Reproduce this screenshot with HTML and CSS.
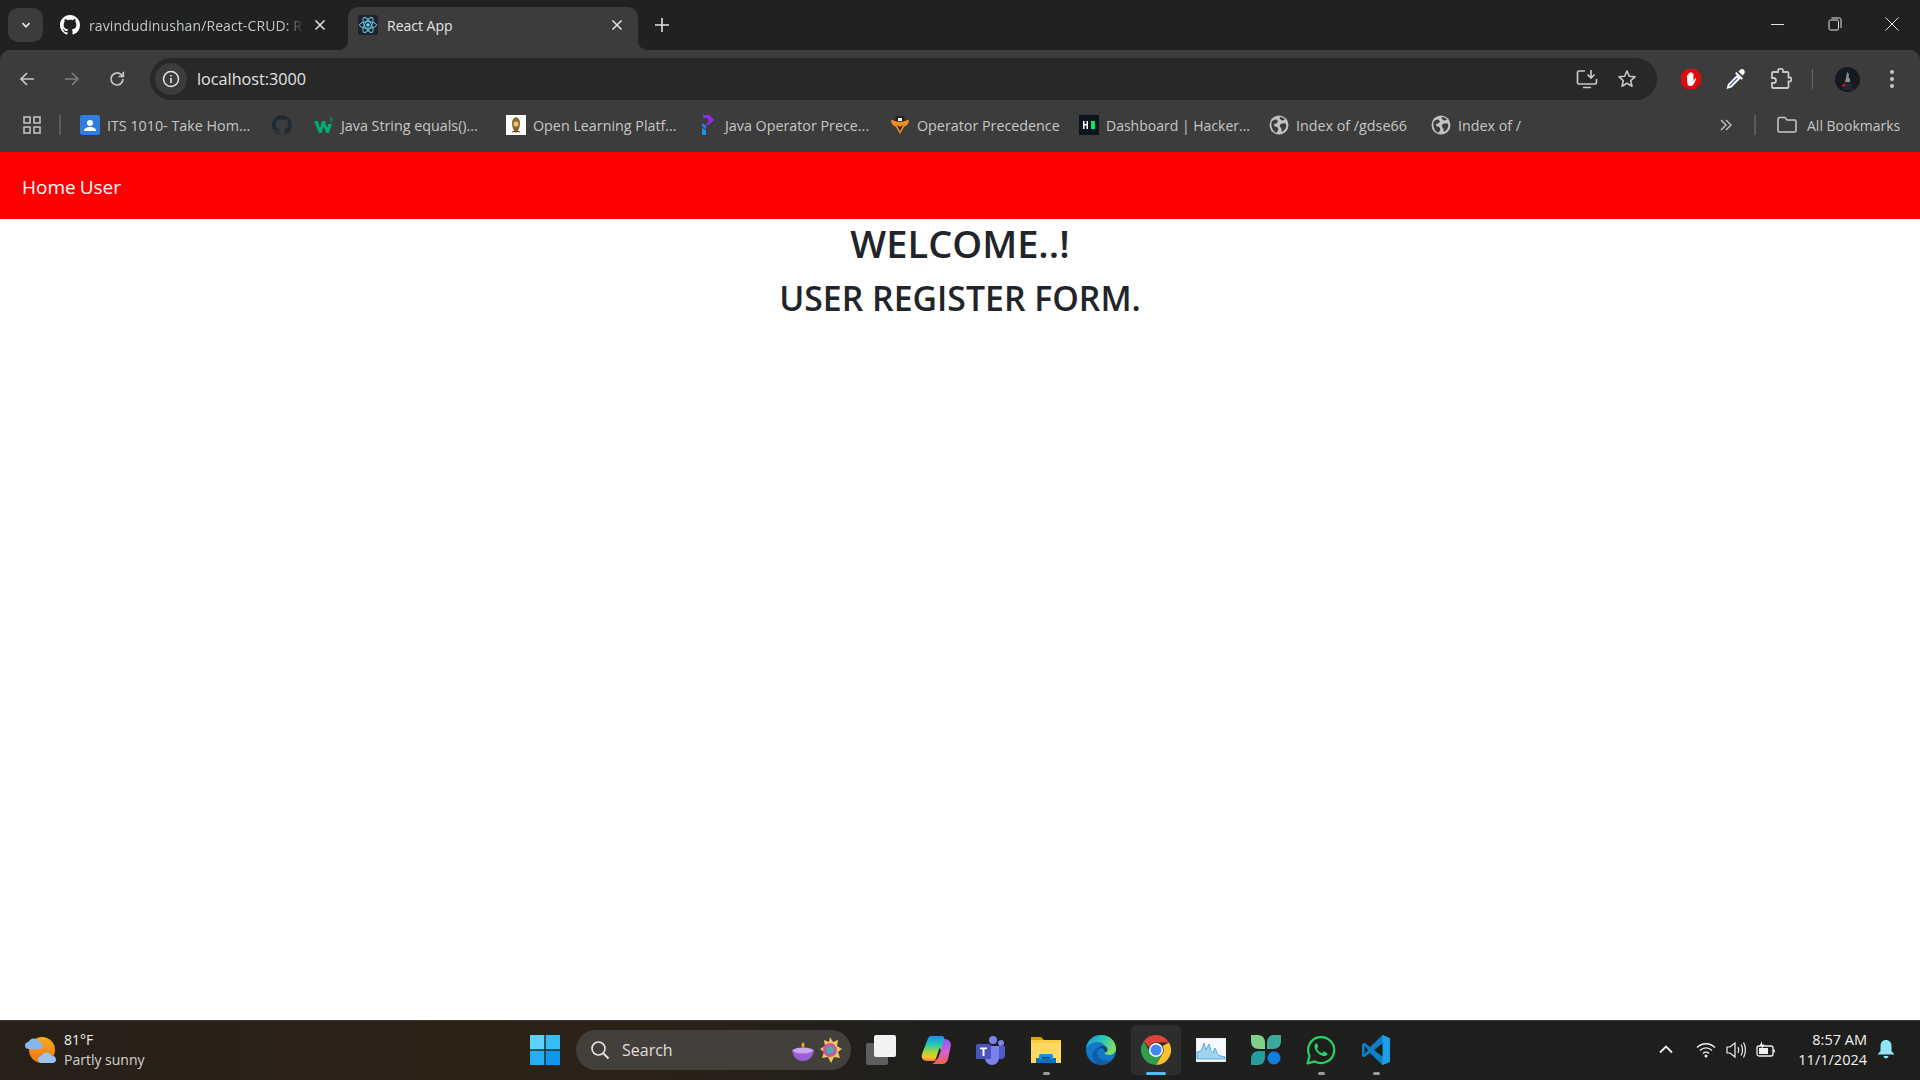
FILE: index.html
```html
<!DOCTYPE html>
<html lang="en">
<head>
    <meta charset="UTF-8">
    <meta name="viewport" content="width=device-width, initial-scale=1.0">
    <title>React App</title>
    <link rel="stylesheet" href="styles.css">
</head>
<body>
    <svg class="defs">
        <symbol id="globe" viewBox="0 0 20 20">
            <circle cx="10" cy="10" r="9.5" fill="#c2c2c2"/>
            <path d="M3 6c2-1 4-2 5-1s1 2 0 3-3 0-3 2 3 1 4 3-1 4-2 5C4 16 1 11 3 6zM12 9c2-1 4-1 5 0 1 3-1 6-4 8-1-2 0-3-1-4s-2-3 0-4zM11 2c2 0 4 1 5 3-2 0-3 1-4 0s-2-2-1-3z" fill="#3c3c3c"/>
        </symbol>
        <symbol id="octo" viewBox="0 0 16 16">
            <path fill-rule="evenodd" d="M8 0C3.58 0 0 3.58 0 8c0 3.54 2.29 6.53 5.47 7.59.4.07.55-.17.55-.38 0-.19-.01-.82-.01-1.49-2.01.37-2.53-.49-2.69-.94-.09-.23-.48-.94-.82-1.13-.28-.15-.68-.52-.01-.53.63-.01 1.08.58 1.23.82.72 1.21 1.87.87 2.33.66.07-.52.28-.87.51-1.07-1.78-.2-3.64-.89-3.64-3.95 0-.87.31-1.59.82-2.15-.08-.2-.36-1.02.08-2.12 0 0 .67-.21 2.2.82.64-.18 1.32-.27 2-.27.68 0 1.36.09 2 .27 1.53-1.04 2.2-.82 2.2-.82.44 1.1.16 1.92.08 2.12.51.56.82 1.27.82 2.15 0 3.07-1.87 3.75-3.65 3.95.29.25.54.73.54 1.48 0 1.07-.01 1.93-.01 2.2 0 .21.15.46.55.38A8.013 8.013 0 0016 8c0-4.42-3.58-8-8-8z"/>
        </symbol>
    </svg>

    <div class="tabstrip">
        <button class="tab-search">
            <svg width="12" height="12" viewBox="0 0 12 12"><path d="M2.5 4.2 6 7.8l3.5-3.6" fill="none" stroke="#e3e3e3" stroke-width="1.8"/></svg>
        </button>
        <div class="tab tab-first">
            <svg class="tab-icon octo-white" width="20" height="20"><use href="#octo"/></svg>
            <span class="tab-title tab-title-fade">ravindudinushan/React-CRUD: R</span>
            <svg class="tab-close" width="12" height="12" viewBox="0 0 12 12"><path d="M1.5 1.5l9 9m0-9l-9 9" stroke="#e3e3e3" stroke-width="1.5"/></svg>
        </div>
        <div class="tab tab-active">
            <svg class="tab-icon" width="20" height="20" viewBox="0 0 20 20">
                <rect width="20" height="20" rx="2" fill="#20232a"/>
                <g fill="none" stroke="#61dafb" stroke-width="0.9">
                    <ellipse cx="10" cy="10" rx="8.5" ry="3.3"/>
                    <ellipse cx="10" cy="10" rx="8.5" ry="3.3" transform="rotate(60 10 10)"/>
                    <ellipse cx="10" cy="10" rx="8.5" ry="3.3" transform="rotate(120 10 10)"/>
                </g>
                <circle cx="10" cy="10" r="1.7" fill="#61dafb"/>
            </svg>
            <span class="tab-title">React App</span>
            <svg class="tab-close" width="12" height="12" viewBox="0 0 12 12"><path d="M1.5 1.5l9 9m0-9l-9 9" stroke="#e3e3e3" stroke-width="1.5"/></svg>
        </div>
        <svg class="new-tab" width="14" height="14" viewBox="0 0 14 14"><path d="M7 0v14M0 7h14" stroke="#e3e3e3" stroke-width="1.6"/></svg>
        <div class="win-controls">
            <svg width="14" height="14" viewBox="0 0 14 14"><path d="M0 7.5h13" stroke="#e3e3e3" stroke-width="1"/></svg>
            <svg width="14" height="14" viewBox="0 0 14 14"><rect x="1" y="3" width="9.5" height="10" rx="1.5" fill="none" stroke="#e3e3e3"/><path d="M3.5 1h8a1.5 1.5 0 0 1 1.5 1.5V11" fill="none" stroke="#e3e3e3"/></svg>
            <svg width="14" height="14" viewBox="0 0 14 14"><path d="M.5.5l13 13m0-13l-13 13" stroke="#e3e3e3" stroke-width="1"/></svg>
        </div>
    </div>

    <div class="chrome">
        <div class="toolbar">
            <svg class="nav-btn" width="18" height="18" viewBox="0 0 18 18"><path d="M16 9H3M9 3 3 9l6 6" fill="none" stroke="#c7c7c7" stroke-width="1.7"/></svg>
            <svg class="nav-btn" width="18" height="18" viewBox="0 0 18 18"><path d="M2 9h13M9 3l6 6-6 6" fill="none" stroke="#7d7d7d" stroke-width="1.7"/></svg>
            <svg class="nav-btn" width="18" height="18" viewBox="0 0 18 18"><path d="M15 9a6 6 0 1 1-1.8-4.3L15 6.5M15.300 1.800V6.500H10.600" fill="none" stroke="#c7c7c7" stroke-width="1.7"/></svg>
            <div class="omnibox">
                <span class="site-info">
                    <svg width="18" height="18" viewBox="0 0 18 18"><circle cx="9" cy="9" r="7.500" fill="none" stroke="#e3e3e3" stroke-width="1.500"/><path d="M9 8v5M9 5v1.600" stroke="#e3e3e3" stroke-width="1.600"/></svg>
                </span>
                <span class="url">localhost:3000</span>
                <svg class="omni-install" width="22" height="20" viewBox="0 0 22 20"><path d="M9 2H3a1.500 1.500 0 0 0-1.500 1.500v10A1.500 1.500 0 0 0 3 15h16a1.500 1.500 0 0 0 1.500-1.500V10M7 18.500h8" fill="none" stroke="#c7c7c7" stroke-width="1.700"/><path d="M15 1v8m-3.500-3.500L15 9l3.500-3.500" fill="none" stroke="#c7c7c7" stroke-width="1.700"/></svg>
                <svg class="omni-star" width="20" height="20" viewBox="0 0 20 20"><path d="m10 2 2.300 5.300 5.700.5-4.300 3.800 1.300 5.600-5-3-5 3 1.300-5.600L2 7.800l5.700-.5z" fill="none" stroke="#c7c7c7" stroke-width="1.600" stroke-linejoin="round"/></svg>
            </div>
            <div class="ext-icons">
                <svg width="22" height="22" viewBox="0 0 22 22"><path d="M6.500 1h9L21 6.500v9L15.500 21h-9L1 15.500v-9z" fill="#e20b0b"/><path d="M7 12V7.500a1 1 0 0 1 1.500 0V11V5.500a1 1 0 0 1 1.700 0V11V4.800a1 1 0 0 1 1.700 0V11V5.800a1 1 0 0 1 1.600 0V13c1-1 1-2.500 2.300-2.700.5 0 .4.700.2 1-.9 1.700-1.500 4.700-3.500 6.200-1.500.8-3.500.6-4.700-.4C7.700 15.700 7 14 7 12z" fill="#fff"/></svg>
                <svg width="22" height="22" viewBox="0 0 22 22"><path d="M15 2c1-1.200 3-1.200 4 0s1.100 3 0 4l-1.500 1.500-4-4z" fill="#fff"/><path d="M11.500 4l6.500 6.500-1.500 1.300L10 5.300z" fill="#fff"/><path d="M12 7 3 16l-1.500 5 5-1.500 9-9z" fill="#fff"/><path d="M12 9.500 5 16.500l-1.500 2 2-.7 7-7z" fill="#2d55c8"/></svg>
                <svg width="22" height="22" viewBox="0 0 22 22"><path d="M8 4V3a2.500 2.500 0 0 1 5 0v1h4.500a1 1 0 0 1 1 1v4.500h1a2 2 0 0 1 0 4h-1V19a1 1 0 0 1-1 1H3a1 1 0 0 1-1-1v-4h1.500a2.500 2.500 0 0 0 0-5H2V5a1 1 0 0 1 1-1z" fill="none" stroke="#c7c7c7" stroke-width="1.800"/></svg>
                <span class="tool-sep"></span>
                <svg class="avatar" width="25" height="25" viewBox="0 0 25 25"><circle cx="12.500" cy="12.500" r="12.500" fill="#141a20"/><path d="M12 5l2 2-.5 3 1.500 2v3h-5l1-4z" fill="#8d8f92"/><path d="M9 15h7l2 8H8z" fill="#24282d"/><path d="M7 18l3-1.500 .5 2-3 1.500z" fill="#d8141c"/></svg>
                <svg class="kebab" width="6" height="20" viewBox="0 0 6 20"><circle cx="3" cy="3" r="2" fill="#c7c7c7"/><circle cx="3" cy="10" r="2" fill="#c7c7c7"/><circle cx="3" cy="17" r="2" fill="#c7c7c7"/></svg>
            </div>
        </div>

        <div class="bookmarks">
            <svg class="apps" width="18" height="18" viewBox="0 0 18 18"><g fill="none" stroke="#c7c7c7" stroke-width="1.500"><rect x="1" y="1" width="6" height="6"/><rect x="11" y="1" width="6" height="6"/><rect x="1" y="11" width="6" height="6"/><rect x="11" y="11" width="6" height="6"/></g></svg>
            <span class="bm-sep"></span>
            <div class="bm">
                <svg width="20" height="20" viewBox="0 0 20 20"><rect width="20" height="20" rx="2" fill="#2f7de1"/><circle cx="10" cy="8" r="3" fill="#fff"/><path d="M4 16c0-3 3-4 6-4s6 1 6 4z" fill="#fff"/></svg>
                <span class="bm-label bm-cut">ITS 1010- Take Hom...</span>
            </div>
            <div class="bm">
                <svg class="octo-dark" width="20" height="20"><use href="#octo"/></svg>
            </div>
            <div class="bm">
                <svg width="20" height="20" viewBox="0 0 20 20"><path d="M0 6h4l2 7 2-7h3l2 7 1-4h4l-3 9h-3l-2.500-7L8 18H5z" fill="#04aa6d"/><text class="w3-sup" x="15" y="7">3</text></svg>
                <span class="bm-label bm-cut">Java String equals()...</span>
            </div>
            <div class="bm">
                <svg width="20" height="20" viewBox="0 0 20 20"><rect width="20" height="20" fill="#fff"/><path d="M10 2c3 1 4 3 4 7s-2 7-4 9c-2-2-4-5-4-9s1-6 4-7z" fill="#8a6a2c"/><circle cx="10" cy="9" r="2.500" fill="#e6c87a"/><path d="M6 17c2-1 6-1 8 0" stroke="#7b1c1c" fill="none"/></svg>
                <span class="bm-label bm-cut">Open Learning Platf...</span>
            </div>
            <div class="bm">
                <svg width="20" height="20" viewBox="0 0 20 20"><path d="M5 0h7l4 5-5 5-3-1 3-3-2-3H5z" fill="#8b2fe0"/><path d="M4 8l5 3-2 3-3-3z" fill="#3a6fe8"/><path d="M4 13l4 2v5H4z" fill="#1696e8"/></svg>
                <span class="bm-label bm-cut">Java Operator Prece...</span>
            </div>
            <div class="bm">
                <svg width="20" height="20" viewBox="0 0 20 20"><path d="M1 5c3 0 5 2 9 2s6-2 9-2c0 4-3 6-5 7l-4 7-4-7C4 11 1 9 1 5z" fill="#ef8c1f"/><path d="M6 1h8l1 5H5z" fill="#222"/><rect x="8" y="3" width="4" height="3" fill="#eee"/><path d="M7 10l3 2 3-2-3 6z" fill="#222"/></svg>
                <span class="bm-label bm-op">Operator Precedence</span>
            </div>
            <div class="bm">
                <svg width="20" height="20" viewBox="0 0 20 20"><rect width="20" height="20" fill="#0e141e"/><rect x="12" y="6" width="4" height="8" fill="#00ea64"/><path d="M4 6h1.500v3h2V6H9v8H7.500v-3.500h-2V14H4z" fill="#fff"/></svg>
                <span class="bm-label bm-hr">Dashboard | Hacker...</span>
            </div>
            <div class="bm">
                <svg width="20" height="20"><use href="#globe"/></svg>
                <span class="bm-label bm-index">Index of /gdse66</span>
            </div>
            <div class="bm">
                <svg width="20" height="20"><use href="#globe"/></svg>
                <span class="bm-label">Index of /</span>
            </div>
            <svg class="bm-more" width="12" height="12" viewBox="0 0 12 12"><path d="M1 1l5 5-5 5M6 1l5 5-5 5" fill="none" stroke="#c7c7c7" stroke-width="1.300"/></svg>
            <span class="bm-sep bm-sep-right"></span>
            <div class="bm bm-all">
                <svg width="20" height="18" viewBox="0 0 20 18"><path d="M1 3a1.500 1.500 0 0 1 1.500-1.500H8l2 2.500h7.500A1.500 1.500 0 0 1 19 5.500v9a1.500 1.500 0 0 1-1.500 1.500h-15A1.500 1.500 0 0 1 1 14.500z" fill="none" stroke="#c7c7c7" stroke-width="1.500"/></svg>
                <span class="bm-label bm-all-label">All Bookmarks</span>
            </div>
        </div>
    </div>

    <nav class="navbar">
        <a class="nav-link">Home</a>
        <a class="nav-link">User</a>
    </nav>

    <main class="page">
        <h1>WELCOME..!</h1>
        <h2>USER REGISTER FORM.</h2>
    </main>

    <footer class="taskbar">
        <div class="tb-left">
            <svg width="32" height="32" viewBox="0 0 32 32">
                <defs>
                    <linearGradient id="sun" x1="0" y1="0" x2="0" y2="1"><stop offset="0" stop-color="#f9ac1c"/><stop offset="1" stop-color="#e9760d"/></linearGradient>
                </defs>
                <circle cx="18" cy="16" r="13" fill="url(#sun)"/>
                <path d="M1 11.500a3.500 3.500 0 0 1 3.500-3.500 5.500 5.500 0 0 1 10.300 0 3.500 3.500 0 0 1 1 7H4a3.500 3.500 0 0 1-3-3.500z" fill="#86b6ee"/>
                <path d="M14 25.500a3.500 3.500 0 0 1 3.500-3.500 5.500 5.500 0 0 1 10.300 0 3.500 3.500 0 0 1 1.200 7H17a3.500 3.500 0 0 1-3-3.500z" fill="#9cc3ee"/>
            </svg>
            <div class="weather">
                <span>81°F</span>
                <span class="weather-sub">Partly sunny</span>
            </div>
        </div>
        <div class="tb-center">
            <div class="tb-item">
                <svg width="30" height="30" viewBox="0 0 30 30"><rect x="0" y="0" width="14.300" height="14.300" fill="#5cd2f8"/><rect x="15.700" y="0" width="14.300" height="14.300" fill="#36bcf6"/><rect x="0" y="15.700" width="14.300" height="14.300" fill="#25aef5"/><rect x="15.700" y="15.700" width="14.300" height="14.300" fill="#0d97ef"/></svg>
            </div>
            <div class="search">
                <svg width="20" height="20" viewBox="0 0 20 20"><circle cx="8.500" cy="8.500" r="6.500" fill="none" stroke="#e8e8e8" stroke-width="1.600"/><path d="m13.500 13.500 5 5" stroke="#e8e8e8" stroke-width="1.800"/></svg>
                <span class="search-text">Search</span>
                <svg class="search-art" width="52" height="28" viewBox="0 0 52 28">
                    <path d="M12 6c2 2 2 4 0 6-2-2-2-4 0-6z" fill="#f5a623"/>
                    <path d="M1 14c4-3 18-3 22 0-1 7-5 11-11 11S2 21 1 14z" fill="#9a5fd6"/>
                    <ellipse cx="12" cy="14.500" rx="10" ry="3" fill="#c9a6ee"/>
                    <path d="M39 1l3 5 5-2-1 6 5 3-4 3 2 6-6-1-3 6-3-6-6 1 2-6-4-3 5-3-1-6 5 2z" fill="#f4c65e"/>
                    <circle cx="39" cy="14" r="7" fill="#c45aa0"/>
                    <circle cx="39" cy="14" r="3.500" fill="#3fb5a5"/>
                </svg>
            </div>
            <div class="tb-item">
                <svg width="30" height="30" viewBox="0 0 30 30"><rect x="0" y="8" width="22" height="22" rx="2" fill="#5e5e5e"/><rect x="8" y="0" width="22" height="22" rx="2" fill="#f2f2f2"/></svg>
            </div>
            <div class="tb-item">
                <svg width="30" height="30" viewBox="0 0 30 30">
                    <defs>
                        <linearGradient id="cp-left" x1="0.500" y1="0" x2="0.500" y2="1"><stop offset="0" stop-color="#1f8ff0"/><stop offset="0.350" stop-color="#25c9b0"/><stop offset="0.650" stop-color="#a8d83a"/><stop offset="0.850" stop-color="#f7c52e"/><stop offset="1" stop-color="#f57a3c"/></linearGradient>
                        <linearGradient id="cp-right" x1="0.500" y1="0" x2="0.500" y2="1"><stop offset="0" stop-color="#8c5cf0"/><stop offset="0.500" stop-color="#d560d8"/><stop offset="1" stop-color="#f2643c"/></linearGradient>
                    </defs>
                    <path d="M21 7c1.500-3 3-3.500 5-2.500 3 1 4.200 3.500 3.800 6.500l-2.800 13c-.8 3-3 5-6 5H11c2-1 4-2.500 5-5.500z" fill="url(#cp-right)"/>
                    <path d="M10 1h10c3 0 4 2 3 4l-6 18c-1 2-2 3-4 3H6c-4 0-6-3-5-7L6 6c1-3 2-5 4-5z" fill="url(#cp-left)"/>
                    <path d="M18.500 13 15.500 22c-.5 1.500-1 2.500-2 3.500 2.500-.5 3.500-2 4.200-4L20 15z" fill="#1e1e1c"/>
                </svg>
            </div>
            <div class="tb-item">
                <svg width="30" height="30" viewBox="0 0 30 30">
                    <circle cx="25" cy="8" r="3" fill="#7b83eb"/>
                    <circle cx="17" cy="5" r="4" fill="#7b83eb"/>
                    <path d="M20 11h9v9a4 4 0 0 1-4 4h-2z" fill="#5059c9"/>
                    <path d="M9 11h14v12a7 7 0 0 1-14 0z" fill="#7b83eb"/>
                    <rect x="0" y="9" width="15" height="15" rx="1.500" fill="#4b53bc"/>
                    <path d="M4 12.500h7v1.800H8.500V21h-2v-6.700H4z" fill="#fff"/>
                </svg>
            </div>
            <div class="tb-item">
                <svg width="30" height="30" viewBox="0 0 30 30">
                    <path d="M0 2h10l3 3h-13z" fill="#d9a406"/>
                    <path d="M0 5h30v23H0z" fill="#fccf45"/>
                    <path d="M0 8h30v20H0z" fill="#ffd95f"/>
                    <path d="M5 23h20v5H5z" fill="#0b6fc0"/>
                    <path d="M10 19h10a2 2 0 0 1 2 2v3H8v-3a2 2 0 0 1 2-2z" fill="#1c8fe0"/>
                    <rect x="11" y="22" width="8" height="1.500" fill="#063f70"/>
                </svg>
                <span class="tb-dot"></span>
            </div>
            <div class="tb-item">
                <svg width="30" height="30" viewBox="0 0 30 30">
                    <defs>
                        <linearGradient id="edge-top" x1="0" y1="0" x2="1" y2="0.400"><stop offset="0" stop-color="#1594d8"/><stop offset="0.600" stop-color="#2fc6b0"/><stop offset="1" stop-color="#7fdc6a"/></linearGradient>
                    </defs>
                    <circle cx="15" cy="15" r="15" fill="#1477c9"/>
                    <path d="M15 0c8.500 0 15 6 15 14 0 3.500-2.800 6-7 6-3 0-4.500-1-4.500-2.500 1-1 1.500-2 1.500-3.500 0-4-4-7-9-7C6.500 7 2 10 0 14 .5 6 7 0 15 0z" fill="url(#edge-top)"/>
                    <path d="M12 15c-2 4 1 9.500 6 10.500 3 .5 6 .5 9-1.500-3 3.500-7 6-12 6-1.500 0-3-.2-4-.8C6 26 5 20 8 15.500c1-1.500 2.500-2.500 4-3z" fill="#0f5ea8"/>
                    <path d="M12 14.500c.5-2.500 2.500-3.500 5-3.500 2.500 0 4.500 1.500 4.500 3.500 0 1.500-1 2.500-1.500 3-1-.5-2-1.500-2-3-.5-1-2-1.500-3-1.500s-2 .5-3 1.500z" fill="#0d3f70"/>
                </svg>
            </div>
            <div class="tb-item tb-active">
                <svg width="30" height="30" viewBox="0 0 30 30">
                    <path d="M15 0a15 15 0 0 1 13 7.500H15a7.500 7.500 0 0 0-7 4.800L2.800 6.300A15 15 0 0 1 15 0z" fill="#db4437"/>
                    <path d="M28 7.500A15 15 0 0 1 15 30l6.500-11.200A7.500 7.500 0 0 0 21.500 11z" fill="#fbc02d"/>
                    <path d="M2.800 6.300 9 17.200a7.500 7.500 0 0 0 12.500 1.600L15 30A15 15 0 0 1 2.800 6.300z" fill="#2e9e49"/>
                    <circle cx="15" cy="15" r="7" fill="#fff"/>
                    <circle cx="15" cy="15" r="5.500" fill="#4285f4"/>
                </svg>
                <span class="tb-dot tb-dot-active"></span>
            </div>
            <div class="tb-item">
                <svg width="30" height="24" viewBox="0 0 30 24">
                    <rect width="30" height="24" fill="#e8eef5"/>
                    <rect x="1" y="1" width="28" height="22" fill="#f7fafd"/>
                    <path d="M1 21V14l4-1 3-8 2 7 3-6 2 7 2 2 2-5 3 7 3 1 4 1v2z" fill="#9fd5f2" stroke="#2e93d0" stroke-width=".7"/>
                </svg>
            </div>
            <div class="tb-item">
                <svg width="30" height="30" viewBox="0 0 30 30">
                    <path d="M0 0h7c5 0 7 4 7 8v6H8c-5 0-8-3-8-8z" fill="#7fd18a"/>
                    <path d="M30 0h-7c-5 0-7 4-7 8v6h6c5 0 8-3 8-8z" fill="#3aa89a"/>
                    <path d="M0 30h7c5 0 7-4 7-8v-6H8c-5 0-8 3-8 8z" fill="#269c9c"/>
                    <circle cx="23" cy="23" r="6.500" fill="#0f7fe0"/>
                </svg>
            </div>
            <div class="tb-item">
                <svg width="30" height="30" viewBox="0 0 30 30">
                    <path d="M1.500 28.500 3.600 21A13 13 0 1 1 8.800 26.400z" fill="none" stroke="#25d366" stroke-width="2.200" stroke-linejoin="round"/>
                    <path d="M10 8.500c-1.500 1-2 2.800-1.200 5 1.300 3.300 4.300 6.200 7.500 7.300 2.300.7 4 .1 5-1.300.4-.7.2-1.300-.4-1.600l-2.500-1.200c-.5-.2-.9-.1-1.200.3l-.8 1c-.3.3-.6.3-1 .1-1.800-.8-3.300-2.200-4.200-4-.2-.4-.1-.7.100-1l.7-.8c.3-.4.300-.7.100-1.100l-1-2.500c-.3-.6-.7-.6-1.600-.2z" fill="#25d366"/>
                </svg>
                <span class="tb-dot"></span>
            </div>
            <div class="tb-item">
                <svg width="30" height="30" viewBox="0 0 30 30">
                    <path d="M21.500 0 29 3.300v23.400L21.500 30 9 18l-5.500 4.300L1 21V9l2.500-1.300L9 12z" fill="#0e7ec6"/>
                    <path d="M21.500 0 29 3.300v23.400L21.500 30z" fill="#1d9ee8"/>
                    <path d="M21.500 8.500v13L13 15zM3.500 10.700 7 15l-3.500 4.300z" fill="#1e1e1c"/>
                </svg>
                <span class="tb-dot"></span>
            </div>
        </div>
        <div class="tb-right">
            <svg class="tray-chev" width="14" height="9" viewBox="0 0 14 9"><path d="M1 7.500 7 1.500l6 6" fill="none" stroke="#f0f0f0" stroke-width="1.800"/></svg>
            <svg width="20" height="16" viewBox="0 0 20 16"><g fill="none" stroke="#f0f0f0" stroke-width="1.300"><path d="M1 5.500c5-5 13-5 18 0"/><path d="M4 8.500c3.500-3.500 8.500-3.500 12 0"/><path d="M7 11.500c1.700-1.700 4.300-1.700 6 0"/></g><circle cx="10" cy="14" r="1.500" fill="#f0f0f0"/></svg>
            <svg width="20" height="18" viewBox="0 0 20 18"><path d="M1 6h3l5-4v14l-5-4H1z" fill="none" stroke="#f0f0f0" stroke-width="1.200"/><path d="M12 6c1 2 1 4 0 6M15 3.500c2 3 2 8 0 11M17.500 1.500c2.500 4 2.500 11 0 15" fill="none" stroke="#f0f0f0" stroke-width="1.200"/></svg>
            <svg width="20" height="18" viewBox="0 0 20 18"><rect x="1" y="5" width="16" height="10" rx="2" fill="none" stroke="#f0f0f0" stroke-width="1.300"/><rect x="3" y="7" width="9" height="6" fill="#f0f0f0"/><path d="M18 8.500v3" stroke="#f0f0f0" stroke-width="1.600"/><path d="M6 0 3.500 5H6L5 9l3.500-5.500H6z" fill="#f0f0f0"/></svg>
            <div class="clock">
                <span>8:57 AM</span>
                <span>11/1/2024</span>
            </div>
            <svg class="bell" width="18" height="20" viewBox="0 0 18 20"><path d="M9 0c3.500 0 5.500 2.500 5.500 6v5l3 3.500H.5l3-3.500V6C3.500 2.500 5.500 0 9 0z" fill="#8fe3fb"/><path d="M6.500 16h5a2.500 2.500 0 0 1-5 0z" fill="#8fe3fb"/></svg>
        </div>
    </footer>
</body>
</html>
```

FILE: styles.css
```css
* {
    box-sizing: border-box;
}
html, body {
    margin: 0;
    height: 100%;
}
body {
    display: flex;
    flex-direction: column;
    height: 1080px;
    overflow: hidden;
    background-color: #202221;
    font-family: "Open Sans", "Noto Sans", sans-serif;
}
.defs {
    display: none;
}
svg {
    flex-shrink: 0;
    display: block;
}

/* tab strip */
.tabstrip {
    display: flex;
    align-items: flex-end;
    height: 50px;
    padding-left: 8px;
    background-color: #202221;
}
.tab-search {
    align-self: flex-start;
    width: 35px;
    height: 34px;
    margin-top: 8px;
    padding: 0;
    display: flex;
    align-items: center;
    justify-content: center;
    background-color: #3c3c3c;
    border: none;
    border-radius: 10px;
}
.tab {
    display: flex;
    align-items: center;
    width: 290px;
    height: 43px;
    padding: 0 7px 7px 10px;
    gap: 8px;
    color: #c4c7c5;
    font-size: 14px;
}
.tab-first {
    width: 305px;
    padding-left: 17px;
    padding-right: 14px;
    gap: 9px;
}
.tab-active {
    position: relative;
    gap: 9px;
    color: #e3e3e3;
    background-color: #3c3c3c;
    border-radius: 10px 10px 0 0;
}
.tab-active::before,
.tab-active::after {
    content: "";
    position: absolute;
    bottom: 0;
    width: 10px;
    height: 10px;
}
.tab-active::before {
    left: -10px;
    background: radial-gradient(circle at 0 0, transparent 10px, #3c3c3c 10.5px);
}
.tab-active::after {
    right: -10px;
    background: radial-gradient(circle at 100% 0, transparent 10px, #3c3c3c 10.5px);
}
.tab-title {
    flex: 1;
    min-width: 0;
    white-space: nowrap;
}
.tab-title-fade {
    letter-spacing: 0.1px;
    mask-image: linear-gradient(to right, #000 90%, transparent 100%);
    -webkit-mask-image: linear-gradient(to right, #000 90%, transparent 100%);
}
.tab-close {
    margin-right: 8px;
}
.octo-white {
    fill: #fff;
}
.octo-dark {
    fill: #202a33;
}
.new-tab {
    margin: 0 0 18px 17px;
}
.win-controls {
    display: flex;
    align-self: flex-start;
    align-items: center;
    gap: 43px;
    margin-left: auto;
    padding: 17px 21px 0 0;
}

/* toolbar and bookmarks */
.chrome {
    background-color: #3c3c3c;
    border-radius: 10px 10px 0 0;
}
.toolbar {
    display: flex;
    align-items: center;
    height: 50px;
    padding: 8px 19px 0 18px;
}
.nav-btn {
    margin-right: 27px;
}
.nav-btn:nth-child(3) {
    margin-right: 24px;
}
.omnibox {
    display: flex;
    align-items: center;
    width: 1507px;
    height: 42px;
    padding: 0 20px 0 5px;
    background-color: #282828;
    border-radius: 21px;
}
.site-info {
    display: flex;
    align-items: center;
    justify-content: center;
    width: 32px;
    height: 32px;
    background-color: #3c3c3c;
    border-radius: 50%;
}
.url {
    margin-left: 10px;
    color: #e3e3e3;
    font-size: 16.2px;
}
.omni-install {
    margin-left: auto;
}
.omni-star {
    margin-left: 19px;
}
.ext-icons {
    display: flex;
    align-items: center;
    margin-left: 23px;
    gap: 23px;
    flex: 1;
}
.tool-sep {
    width: 1px;
    height: 20px;
    margin: 0 -1px 0 -3px;
    background-color: #6a6a6a;
}
.kebab {
    margin-left: 6px;
}
.bookmarks {
    display: flex;
    align-items: center;
    height: 52px;
    padding: 0 18px 2px 23px;
    color: #c7c7c7;
    font-size: 14.3px;
}
.apps {
    margin-right: 18px;
}
.bm-sep {
    width: 2px;
    height: 20px;
    margin-right: 19px;
    background-color: #5a5a5a;
}
.bm {
    display: flex;
    align-items: center;
    gap: 7px;
    margin-right: 22px;
}
.bm-label {
    white-space: nowrap;
}
.bm-cut {
    width: 143px;
}
.bm-op {
    width: 140px;
}
.bm-hr {
    width: 141px;
    font-size: 14px;
}
.bm-index {
    width: 113px;
}
.w3-sup {
    font-size: 7px;
    fill: #04aa6d;
}
.bm-more {
    margin-left: auto;
    margin-right: 22px;
}
.bm-sep-right {
    margin-right: 21px;
}
.bm-all {
    margin-right: 0;
    gap: 10px;
}
.bm-all-label {
    width: 95px;
    font-size: 14px;
}

/* page */
.navbar {
    display: flex;
    align-items: center;
    height: 67px;
    padding: 3px 22px 0;
    gap: 4px;
    background-color: #f00;
}
.nav-link {
    color: #fff;
    font-size: 19px;
}
.page {
    flex: 1;
    background-color: #fff;
    color: #212529;
    text-align: center;
}
h1, h2 {
    margin: 0;
    font-weight: 600;
}
h1 {
    font-size: 38px;
    line-height: 48px;
}
h2 {
    padding-top: 11px;
    font-size: 33.8px;
    line-height: 40px;
}

/* taskbar */
.taskbar {
    display: flex;
    align-items: center;
    justify-content: space-between;
    height: 60px;
    padding-bottom: 2px;
    color: #f0f0f0;
    font-size: 14px;
    border-top: 1px solid #3b3a37;
    background: linear-gradient(to right, #262019 0, #2e2216 25%, #2a2118 35%, #1f1f1d 48%, #1e1e1c 100%);
}
.tb-left, .tb-right {
    flex: 1;
    display: flex;
    align-items: center;
}
.tb-left {
    padding-left: 24px;
    gap: 8px;
}
.weather {
    display: flex;
    flex-direction: column;
    line-height: 20px;
}
.weather-sub {
    color: #d5d3d0;
}
.tb-center {
    display: flex;
    align-items: center;
    gap: 5px;
    margin-left: 2px;
}
.tb-item {
    position: relative;
    display: flex;
    align-items: center;
    justify-content: center;
    width: 50px;
    height: 50px;
}
.tb-active {
    background-color: #2d2d2d;
    border-radius: 5px;
}
.tb-dot {
    position: absolute;
    bottom: 0;
    left: 22px;
    width: 7px;
    height: 3px;
    background-color: #9a9a9a;
    border-radius: 2px;
}
.tb-dot-active {
    left: 15px;
    width: 20px;
    background-color: #47c1f7;
}
.search {
    display: flex;
    align-items: center;
    width: 275px;
    height: 40px;
    margin: 0 0 0 1px;
    padding: 0 8px 0 14px;
    background-color: #43403c;
    border-radius: 20px;
}
.search-text {
    margin-left: 12px;
    color: #e0ded9;
    font-size: 16px;
}
.search-art {
    margin-left: auto;
}
.tb-right {
    justify-content: flex-end;
    padding-right: 25px;
}
.tray-chev {
    margin-right: 23px;
}
.tb-right svg:nth-child(2),
.tb-right svg:nth-child(3) {
    margin-right: 10px;
}
.clock {
    display: flex;
    flex-direction: column;
    align-items: flex-end;
    margin-left: 22px;
    line-height: 20px;
    font-size: 14.5px;
}
.bell {
    margin-left: 10px;
}
```
